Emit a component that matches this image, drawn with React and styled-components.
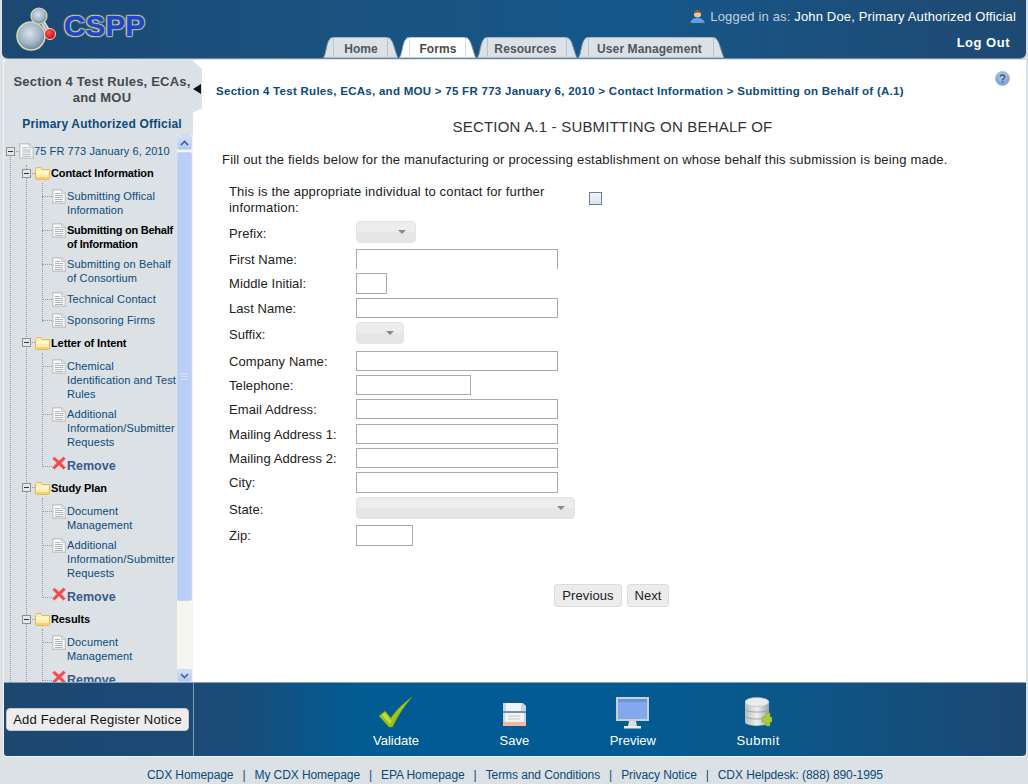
import React from "react";
import styled, { createGlobalStyle } from "styled-components";

const Global = createGlobalStyle`
  html, body { margin: 0; padding: 0; background: #dbe1e4; }
  body { font-family: "Liberation Sans", Arial, sans-serif; overflow: hidden; }
  * { box-sizing: border-box; }
`;

const Page = styled.div`
  width: 1028px; height: 784px; display: flex; flex-direction: column; background: #dbe1e4; overflow: hidden;
`;

/* ---------- Header ---------- */
const Header = styled.header`
  height: 59px; margin: 0 2px; display: flex;
  border-radius: 0 0 6px 6px; border-bottom: 1px solid #6d8ba6;
  background: linear-gradient(90deg, #1c4872 0%, #1a527f 30%, #16578a 62%, #1c4e7a 85%, #1e4a72 100%);
`;
const Brand = styled.div`
  display: flex; align-items: flex-start; gap: 2px; padding: 7px 0 0 14px; width: 321px; flex: none;
`;
const BrandName = styled.span`
  font-size: 29.5px; font-weight: 700; line-height: 38px; letter-spacing: 0.2px; color: #1f45c8;
  -webkit-text-stroke: 0.5px #2145c0;
  text-shadow: 0 0 2px #e6e6a6, 1px 1px 1px #c9cf98, -1px -1px 1px #c9cf98, 1px -1px 1px #c9cf98, -1px 1px 1px #c9cf98;
`;
const Tabs = styled.nav`
  flex: none; display: flex; align-items: flex-end; align-self: flex-end;
`;
const Tab = styled.a`
  position: relative; height: 21px; display: flex; align-items: center; justify-content: center;
  font-size: 12px; font-weight: 700; letter-spacing: 0.1px; padding: 2px ${p => p.$nudge ?? 0}px 0 0;
  width: ${p => p.$w}px;
  color: ${p => (p.$active ? "#4a4a4a" : "#4f5660")};
  & > svg { position: absolute; left: 0; top: 0; }
  & > span { position: relative; }
`;
const HeaderRight = styled.div`
  flex: none; display: flex; flex-direction: column; align-items: flex-end;
  padding: 6px 13px 0 0; white-space: nowrap; position: relative; width: 336px; margin-left: -32px;
`;
const LoginLine = styled.div`
  display: flex; align-items: center; gap: 5px; font-size: 13px; height: 20px; color: #c3d0dc; letter-spacing: 0.16px;
  & b { font-weight: 400; color: #fff; }
`;
const LogOut = styled.a`
  font-size: 13px; font-weight: 700; color: #fff; margin: 9px 6px 0 0; letter-spacing: 0.5px;
`;

/* ---------- Main ---------- */
const Main = styled.div`
  height: 622px; display: flex; margin: 1px 2px 0 3px; background: #fff;
`;
const Sidebar = styled.aside`
  position: relative; z-index: 1; width: 190px; flex: none; display: flex; flex-direction: column;
  background: #dbe1e4; border-left: 1px solid #eef1f2; border-radius: 4px 0 0 0;
`;
const SideTitle = styled.h2`
  margin: 0; padding: 14px 1px 0 8px; font-size: 13px; line-height: 16px; font-weight: 700;
  text-align: center; color: #45494d; letter-spacing: 0.2px; height: 52px;
`;
const CollapseTab = styled.div`
  position: absolute; left: 188px; top: 0; width: 10px; height: 53px; background: #dbe1e4;
  clip-path: polygon(0 0, 100% 17%, 100% 91%, 0 100%);
  &::after {
    content: ""; position: absolute; left: 1px; top: 24px;
    border: 5px solid transparent; border-right: 8px solid #111; border-left: 0;
  }
`;
const Role = styled.div`
  font-size: 12px; font-weight: 700; text-align: center; color: #0b4a7c; letter-spacing: 0.2px;
  padding: 5px 0 0 7px; height: 23px;
`;
const TreeWrap = styled.div`
  flex: 1; min-height: 0; display: flex;
`;
const Tree = styled.div`
  position: relative; flex: 1; overflow: hidden; padding-top: 8px;
  &::before {
    content: ""; position: absolute; left: 6px; top: 14px; bottom: 0; border-left: 1px dotted #9a9a9a;
  }
`;
const Scrollbar = styled.div`
  width: 16px; flex: none; display: flex; flex-direction: column; background: #f5f6ef;
  padding-right: 1px;
`;
const ScrollBtn = styled.div`
  height: ${p => p.$h}px; flex: none; display: flex; align-items: center; justify-content: center;
  background: linear-gradient(#d4e1fb, #b4c8f2); border: 1px solid #cdd9ee; border-radius: 2px;
`;
const Thumb = styled.div`
  height: 449px; margin-top: 2px; flex: none; background: #bacff8; border: 1px solid #c6d4ee; border-radius: 2px;
  display: flex; align-items: center; justify-content: center;
  & i { display: block; width: 7px; height: 7px; border-top: 1px solid #d8e3fa; border-bottom: 1px solid #d8e3fa; position: relative; }
  & i::after { content: ""; position: absolute; left: 0; right: 0; top: 2px; border-top: 1px solid #d8e3fa; }
`;
const ScrollSpace = styled.div`flex: 1;`;

const RootRow = styled.div`
  display: flex; align-items: center; height: 16px; padding-left: 2px; position: relative;
  font-size: 11px; color: #0b4a7c; letter-spacing: 0.1px; white-space: nowrap;
  & > svg { flex: none; }
`;
const Groups = styled.div`
  position: relative;
  &::before {
    content: ""; position: absolute; left: 22px; top: 0; bottom: 0; border-left: 1px dotted #9a9a9a;
  }
`;
const Group = styled.div`
  margin-top: ${p => (p.$first ? 6 : 7)}px;
`;
const GroupHead = styled.div`
  display: flex; align-items: center; height: 16px; padding-left: 18px; position: relative; z-index: 1;
  font-size: 11px; font-weight: 700; color: #000; letter-spacing: -0.1px; white-space: nowrap;
  & > svg { flex: none; }
`;
const Leaves = styled.div`
  position: relative; padding: 8px 0 0 48px;
  &::before {
    content: ""; position: absolute; left: 38px; top: 2px; bottom: 6px; border-left: 1px dotted #9a9a9a;
  }
`;
const Leaf = styled.div`
  position: relative; display: flex; margin-top: ${p => (p.$first ? 0 : 6.2)}px; white-space: nowrap;
  font-size: 11px; line-height: 14px; letter-spacing: 0.12px; color: #0b4a7c;
  font-weight: ${p => (p.$current ? 700 : 400)};
  ${p => p.$current && "color: #000; letter-spacing: -0.23px;"}
  &::before {
    content: ""; position: absolute; left: -10px; top: 7px; width: 10px; border-top: 1px dotted #9a9a9a;
  }
  & > svg { flex: none; margin-right: 1px; }
`;
const RemoveRow = styled(Leaf)`
  margin-top: 10px; height: 14px; align-items: flex-end; font-size: 12.5px; font-weight: 700; letter-spacing: 0; color: #3a5b8f;
  line-height: 16px;
  & > span { margin-bottom: -1px; }
`;

/* ---------- Content ---------- */
const Content = styled.main`
  position: relative; flex: 1; min-width: 0; padding: 24px 0 0 23px; background: #fff;
`;
const HelpIcon = styled.div`
  position: absolute; right: 16px; top: 11px; line-height: 0;
`;
const Crumbs = styled.div`
  font-size: 11.5px; font-weight: 700; color: #0b4a7c; letter-spacing: 0.28px; line-height: 14px; white-space: nowrap;
`;
const Title = styled.h1`
  margin: 21px 0 0 -23px; padding-left: 6px; font-size: 15px; line-height: 16px; font-weight: 400; text-align: center; color: #333;
  letter-spacing: 0.2px;
`;
const Intro = styled.p`
  margin: 17px 0 0 6px; font-size: 13px; line-height: 16px; color: #222; letter-spacing: 0.19px; white-space: nowrap;
`;
const Form = styled.form`
  margin: 16px 0 0 13px; display: flex; flex-direction: column; color: #222;
`;
const Row = styled.div`
  display: flex; align-items: flex-start; height: ${p => p.$h}px; font-size: 13px;
`;
const Label = styled.label`
  width: 127px; flex: none; padding-top: ${p => p.$top ?? 4}px; line-height: 14px; letter-spacing: 0.08px; white-space: nowrap;
`;
const WideLabel = styled.label`
  width: 320px; flex: none; line-height: 16px; letter-spacing: 0.16px;
`;
const Field = styled.input`
  display: block; width: ${p => p.$w}px; height: ${p => p.$fh ?? 20}px; padding: 0; background: #fff; outline: 0;
  border: 1px solid #a9a9a9; border-radius: 0;
  ${p => p.$open && "border-bottom: 0;"}
`;
const Select = styled.div`
  position: relative; width: ${p => p.$w}px; height: 22px; border: 1px solid #e3e3e3; border-radius: 4px;
  background: linear-gradient(#ededed 0 50%, #e6e6e6 50% 100%);
  &::after {
    content: ""; position: absolute; right: 9px; top: 8px;
    border: 4px solid transparent; border-top: 4px solid #8a8a8a; border-bottom: 0;
  }
`;
const Check = styled.span`
  display: block; width: 13px; height: 13px; margin: 8px 0 0 40px; background: linear-gradient(#f4f4f4, #dfe3ea);
  border: 1px solid #5d83a8;
`;
const Actions = styled.div`
  display: flex; gap: 5px; margin: 38px 0 0 325px;
`;
const Btn = styled.button`
  height: 23px; width: ${p => p.$w}px; padding: 0; border: 1px solid #dcdcdc; border-radius: 3px; background: #ececec;
  font: 13px "Liberation Sans", Arial, sans-serif; color: #222; letter-spacing: 0.1px;
`;

/* ---------- Bottom bar ---------- */
const Bar = styled.div`
  height: 75px; margin: 0 2px 0 3px; display: flex; border-bottom: 1px solid #f1f4f5; border-left: 1px solid #f1f4f5;
  border-top: 1px solid #7fa2bd; border-radius: 0 0 4px 4px;
  background: linear-gradient(90deg, #1c4770 0%, #1b4b77 22%, #025c93 35%, #025c93 62%, #0d5688 78%, #1c4770 100%);
`;
const BarLeft = styled.div`
  width: 190px; flex: none; display: flex; align-items: center; padding: 0 0 1px 2px; border-right: 1px solid #7c9cb6;
`;
const AddBtn = styled.button`
  width: 183px; height: 23px; padding: 0; border: 1px solid #c8c8c8; border-radius: 4px; background: #ededed;
  font: 13px "Liberation Sans", Arial, sans-serif; color: #111; letter-spacing: 0.2px; white-space: nowrap;
`;
const BarActions = styled.div`
  display: flex; gap: 80.5px; padding: 14px 0 0 179px;
`;
const BarAction = styled.a`
  display: flex; flex-direction: column; align-items: center; color: #fff; font-size: 13px;
  letter-spacing: ${p => p.$ls ?? 0}px;
  & svg { display: block; height: 32px; }
  & span { margin-top: 4px; line-height: 16px; }
`;

/* ---------- Footer ---------- */
const Footer = styled.footer`
  flex: 1; display: flex; justify-content: center; align-items: center; gap: 9px; padding: 9px 0 0 2px;
  font-size: 12px; color: #0b4a7c; letter-spacing: -0.08px;
  & a + a::before { content: "|"; margin-right: 9px; }
`;

/* ---------- Icons ---------- */
const Molecule = () => (
  <svg width="46" height="44" viewBox="0 0 46 44" style={{ flex: "none" }}>
    <defs>
      <radialGradient id="mb" cx="45%" cy="40%" r="65%"><stop offset="0" stopColor="#d9e2ea" /><stop offset="0.6" stopColor="#9fb3c6" /><stop offset="1" stopColor="#5f7a94" /></radialGradient>
      <radialGradient id="mr" cx="40%" cy="35%" r="70%"><stop offset="0" stopColor="#ff5a5a" /><stop offset="1" stopColor="#c80010" /></radialGradient>
    </defs>
    <path d="M15 28 L23 9 L34 27 Z" fill="none" stroke="#d6dfe6" strokeWidth="4.5" />
    <path d="M15 28 L23 9 L34 27 Z" fill="none" stroke="#7d92a8" strokeWidth="1" />
    <circle cx="15" cy="29" r="14" fill="url(#mb)" stroke="#d8dcae" strokeWidth="1.5" />
    <circle cx="23" cy="9" r="8" fill="url(#mb)" stroke="#d8dcae" strokeWidth="1.2" />
    <circle cx="34" cy="27" r="5.5" fill="url(#mr)" stroke="#e3e4b5" strokeWidth="1" />
  </svg>
);
const UserIcon = () => (
  <svg width="15" height="15" viewBox="0 0 15 15">
    <path d="M0.5 14 C1 10 4 9 7.5 9 C11 9 14 10 14.5 14 Z" fill="#5aa2ef" />
    <path d="M0.5 13 h3 v1.2 h-3z M11.5 13 h3 v1.2 h-3z" fill="#b4703a" />
    <circle cx="7.5" cy="5" r="3.6" fill="#f0c39a" />
    <path d="M3.8 5 C3.4 1 11.5 0 11.2 5 C10 3.2 6 3 3.8 5 Z" fill="#8a4a1c" />
  </svg>
);
const HelpSvg = () => (
  <svg width="15" height="15" viewBox="0 0 15 15">
    <defs><radialGradient id="hg" cx="50%" cy="35%" r="65%"><stop offset="0" stopColor="#c0d4ea" /><stop offset="1" stopColor="#6f96c8" /></radialGradient></defs>
    <circle cx="7.5" cy="7.5" r="7" fill="url(#hg)" stroke="#a8c0dc" />
    <path d="M5.3 5.8 C5.4 3.6 9.7 3.6 9.7 5.9 C9.7 7.4 7.6 7.3 7.6 8.9" fill="none" stroke="#3e5f8e" strokeWidth="1.6" />
    <rect x="6.8" y="9.8" width="1.7" height="1.7" fill="#3e5f8e" />
  </svg>
);
const Expander = () => (
  <svg width="9" height="9" viewBox="0 0 9 9" style={{ marginRight: 1 }}>
    <rect x=".5" y=".5" width="8" height="8" fill="#e4e7e8" stroke="#8d9296" />
    <rect x="2" y="4" width="5" height="1" fill="#333" />
  </svg>
);
const Dash = () => <svg width="3" height="9" viewBox="0 0 3 9"><path d="M0 4.5h3" stroke="#9a9a9a" strokeDasharray="1 1" /></svg>;
const Folder = () => (
  <svg width="15" height="14" viewBox="0 0 15 14" style={{ marginRight: 1 }}>
    <path d="M.5 3.5 V12.5 a1 1 0 0 0 1 1 H13.5 a1 1 0 0 0 1 -1 V3.5 H7 L6 1.5 H1.5 Z" fill="#fdeea6" stroke="#e7b95a" />
    <rect x="1" y="5" width="13" height="3" fill="#fff7cc" />
    <rect x="1" y="11" width="13" height="2" fill="#f6cf72" />
  </svg>
);
const Doc = ({ w = 14, h = 15 }) => (
  <svg width={w} height={h} viewBox="0 0 14 15" preserveAspectRatio="none">
    <path d="M.7 .7 H9.5 L13.3 4.5 V14.3 H.7 Z" fill="#fbfbfb" stroke="#c4c8cb" strokeWidth="1.4" />
    <path d="M9.5 .7 V4.5 H13.3" fill="#e4e6e8" stroke="#c4c8cb" />
    <path d="M3 4.5h5M3 6.5h8M3 8.5h8M3 10.5h8M3 12.5h8" stroke="#b0b4b8" />
  </svg>
);
const RedX = () => (
  <svg width="14" height="14" viewBox="0 0 14 14" style={{ marginBottom: 3 }}>
    <path d="M2.5 1 L7 4.8 L11.5 .8 L13.6 2.8 L9.3 7 L13.6 11.4 L11.5 13.4 L7 9.2 L2.5 13.4 L.4 11.4 L4.8 7 L.4 2.8 Z" fill="#f2484e" stroke="#f58f90" strokeWidth=".6" />
  </svg>
);
const Chevron = ({ up }) => (
  <svg width="9" height="6" viewBox="0 0 9 6"><path d={up ? "M1 5 L4.5 1.5 L8 5" : "M1 1 L4.5 4.5 L8 1"} fill="none" stroke="#3f5f8f" strokeWidth="1.6" /></svg>
);
const CheckIcon = () => (
  <svg width="36" height="32" viewBox="0 0 36 32">
    <path d="M1 19 L7 14 L13 21 C18 13 26 6 34 0 C27 8 20 18 14.5 30 L11 30 Z" fill="#9cc21c" stroke="#7a9a10" strokeWidth=".5" />
    <path d="M4 18 L12 27 C17 17 23 9 31 3 C23 10 18 16 13 24 L7 15.5 Z" fill="#c3dd48" />
  </svg>
);
const SaveIcon = () => (
  <svg width="24" height="32" viewBox="0 0 24 32">
    <g transform="translate(0 5)">
      <path d="M1 1 H21 L24 4 V24 H1 Z" fill="#c4d6e8" />
      <rect x="4" y="1" width="15" height="8" fill="#f1f4f7" />
      <rect x="1" y="9" width="23" height="2" fill="#6f93b8" />
      <rect x="3" y="11" width="19" height="9" fill="#f3f3f1" />
      <rect x="1" y="20" width="23" height="4" fill="#eeb9a0" />
      <path d="M6 14h12M6 17h12" stroke="#c5c9cd" />
    </g>
  </svg>
);
const MonitorIcon = () => (
  <svg width="33" height="32" viewBox="0 0 33 32">
    <rect x="0" y="0" width="33" height="24" fill="#c6ced6" />
    <rect x="2" y="2" width="29" height="20" fill="#84a8ec" />
    <rect x="2" y="2" width="29" height="3" fill="#6d92dc" />
    <path d="M13 24 H20 L21 29 H12 Z" fill="#d9dde1" />
    <rect x="8" y="29" width="17" height="2.5" fill="#eceef0" />
  </svg>
);
const DbIcon = () => (
  <svg width="27" height="32" viewBox="0 0 27 32">
    <defs><linearGradient id="dbg" x1="0" x2="1"><stop offset="0" stopColor="#b8bdc1" /><stop offset=".5" stopColor="#eff0f1" /><stop offset="1" stopColor="#9da3a8" /></linearGradient></defs>
    <path d="M0 6 V25 C0 30 24 30 24 25 V6 Z" fill="url(#dbg)" />
    <ellipse cx="12" cy="5" rx="12" ry="4.5" fill="#e9ecee" stroke="#b0b5ba" strokeWidth=".6" />
    <path d="M0 12 C0 16 24 16 24 12 M0 19 C0 23 24 23 24 19" fill="none" stroke="#8f969b" strokeWidth=".8" />
    <path d="M17 20 H21 V16 H25 V20 H27 V25 H25 V29 H21 V25 H17 Z" fill="#a6cd3c" stroke="#7f9f25" strokeWidth=".5" />
  </svg>
);

const tabs = [
  { label: "Home", w: 76 },
  { label: "Forms", w: 78, active: true },
  { label: "Resources", w: 101, nudge: 4 },
  { label: "User Management", w: 147, nudge: 4 },
];

const TabShape = ({ w, active }) => {
  const h = 21;
  const d = `M0 ${h} C3 ${h - 3} 3 8 6 3 Q7.5 0 11 0 H${w - 13} Q${w - 9} 0 ${w - 7} 4 C${w - 5} 8 ${w - 3} ${h - 4} ${w - 1} ${h} Z`;
  return (
    <svg width={w} height={h} viewBox={`0 0 ${w} ${h}`}>
      <path d={d} fill={active ? "#fff" : "#dbe1e4"} stroke="#7b8fa3" strokeWidth="1" />
      <path d={`M10.5 1V${h}M${w - 11.5} 1V${h}`} stroke={active ? "#d3dde5" : "#b4c6d6"} />
    </svg>
  );
};

const tree = [
  {
    name: "Contact Information",
    items: [
      { text: ["Submitting Offical", "Information"] },
      { text: ["Submitting on Behalf", "of Information"], current: true },
      { text: ["Submitting on Behalf", "of Consortium"] },
      { text: ["Technical Contact"] },
      { text: ["Sponsoring Firms"] },
    ],
  },
  {
    name: "Letter of Intent",
    items: [
      { text: ["Chemical", "Identification and Test", "Rules"] },
      { text: ["Additional", "Information/Submitter", "Requests"] },
    ],
    remove: true,
  },
  {
    name: "Study Plan",
    items: [
      { text: ["Document", "Management"] },
      { text: ["Additional", "Information/Submitter", "Requests"] },
    ],
    remove: true,
  },
  {
    name: "Results",
    items: [{ text: ["Document", "Management"] }],
    remove: true,
  },
];

const fields = [
  { label: "First Name:", h: 24, w: 202, open: true },
  { label: "Middle Initial:", h: 25, w: 31, fh: 21 },
  { label: "Last Name:", h: 24, w: 202 },
  { label: "Suffix:", h: 29, select: 48 },
  { label: "Company Name:", h: 24, w: 202 },
  { label: "Telephone:", h: 24, w: 115 },
  { label: "Email Address:", h: 25, w: 202 },
  { label: "Mailing Address 1:", h: 24, w: 202 },
  { label: "Mailing Address 2:", h: 24, w: 202 },
  { label: "City:", h: 25, w: 202, fh: 21 },
  { label: "State:", h: 28, select: 219 },
  { label: "Zip:", h: 21, w: 57, fh: 21 },
];

export default function App() {
  return (
    <Page>
      <Global />
      <Header>
        <Brand>
          <Molecule />
          <BrandName>CSPP</BrandName>
        </Brand>
        <Tabs>
          {tabs.map(t => (
            <Tab key={t.label} $active={t.active} $w={t.w} $nudge={t.nudge}>
              <TabShape w={t.w} active={t.active} />
              <span>{t.label}</span>
            </Tab>
          ))}
        </Tabs>
        <HeaderRight>
          <LoginLine>
            <UserIcon />
            <span>Logged in as: <b>John Doe, Primary Authorized Official</b></span>
          </LoginLine>
          <LogOut>Log Out</LogOut>
        </HeaderRight>
      </Header>

      <Main>
        <Sidebar>
          <CollapseTab />
          <SideTitle>Section 4 Test Rules, ECAs, and MOU</SideTitle>
          <Role>Primary Authorized Official</Role>
          <TreeWrap>
            <Tree>
              <RootRow>
                <Expander />
                <Dash />
                <Doc w={15} h={16} />
                <span>75 FR 773 January 6, 2010</span>
              </RootRow>
              <Groups>
                {tree.map((g, gi) => (
                  <Group key={g.name} $first={gi === 0}>
                    <GroupHead>
                      <Expander />
                      <Dash />
                      <Folder />
                      <span>{g.name}</span>
                    </GroupHead>
                    <Leaves>
                      {g.items.map((it, i) => (
                        <Leaf key={i} $first={i === 0} $current={it.current}>
                          <Doc />
                          <div>{it.text.map(l => <div key={l}>{l}</div>)}</div>
                        </Leaf>
                      ))}
                      {g.remove && (
                        <RemoveRow>
                          <RedX />
                          <span>Remove</span>
                        </RemoveRow>
                      )}
                    </Leaves>
                  </Group>
                ))}
              </Groups>
            </Tree>
            <Scrollbar>
              <ScrollBtn $h={15}><Chevron up /></ScrollBtn>
              <Thumb><i /></Thumb>
              <ScrollSpace />
              <ScrollBtn $h={13}><Chevron /></ScrollBtn>
            </Scrollbar>
          </TreeWrap>
        </Sidebar>

        <Content>
          <HelpIcon><HelpSvg /></HelpIcon>
          <Crumbs>Section 4 Test Rules, ECAs, and MOU &gt; 75 FR 773 January 6, 2010 &gt; Contact Information &gt; Submitting on Behalf of (A.1)</Crumbs>
          <Title>SECTION A.1 - SUBMITTING ON BEHALF OF</Title>
          <Intro>Fill out the fields below for the manufacturing or processing establishment on whose behalf this submission is being made.</Intro>
          <Form>
            <Row $h={37}>
              <WideLabel>This is the appropriate individual to contact for further information:</WideLabel>
              <Check />
            </Row>
            <Row $h={28}>
              <Label $top={6}>Prefix:</Label>
              <Select $w={60} />
            </Row>
            {fields.map(f => (
              <Row key={f.label} $h={f.h}>
                <Label $top={f.select ? 6 : undefined}>{f.label}</Label>
                {f.select ? <Select $w={f.select} /> : <Field $w={f.w} $fh={f.fh} $open={f.open} />}
              </Row>
            ))}
            <Actions>
              <Btn type="button" $w={68}>Previous</Btn>
              <Btn type="button" $w={42}>Next</Btn>
            </Actions>
          </Form>
        </Content>
      </Main>

      <Bar>
        <BarLeft><AddBtn type="button">Add Federal Register Notice</AddBtn></BarLeft>
        <BarActions>
          <BarAction><CheckIcon /><span>Validate</span></BarAction>
          <BarAction><SaveIcon /><span>Save</span></BarAction>
          <BarAction><MonitorIcon /><span>Preview</span></BarAction>
          <BarAction $ls={0.5}><DbIcon /><span>Submit</span></BarAction>
        </BarActions>
      </Bar>

      <Footer>
        <a>CDX Homepage</a>
        <a>My CDX Homepage</a>
        <a>EPA Homepage</a>
        <a>Terms and Conditions</a>
        <a>Privacy Notice</a>
        <a>CDX Helpdesk: (888) 890-1995</a>
      </Footer>
    </Page>
  );
}
